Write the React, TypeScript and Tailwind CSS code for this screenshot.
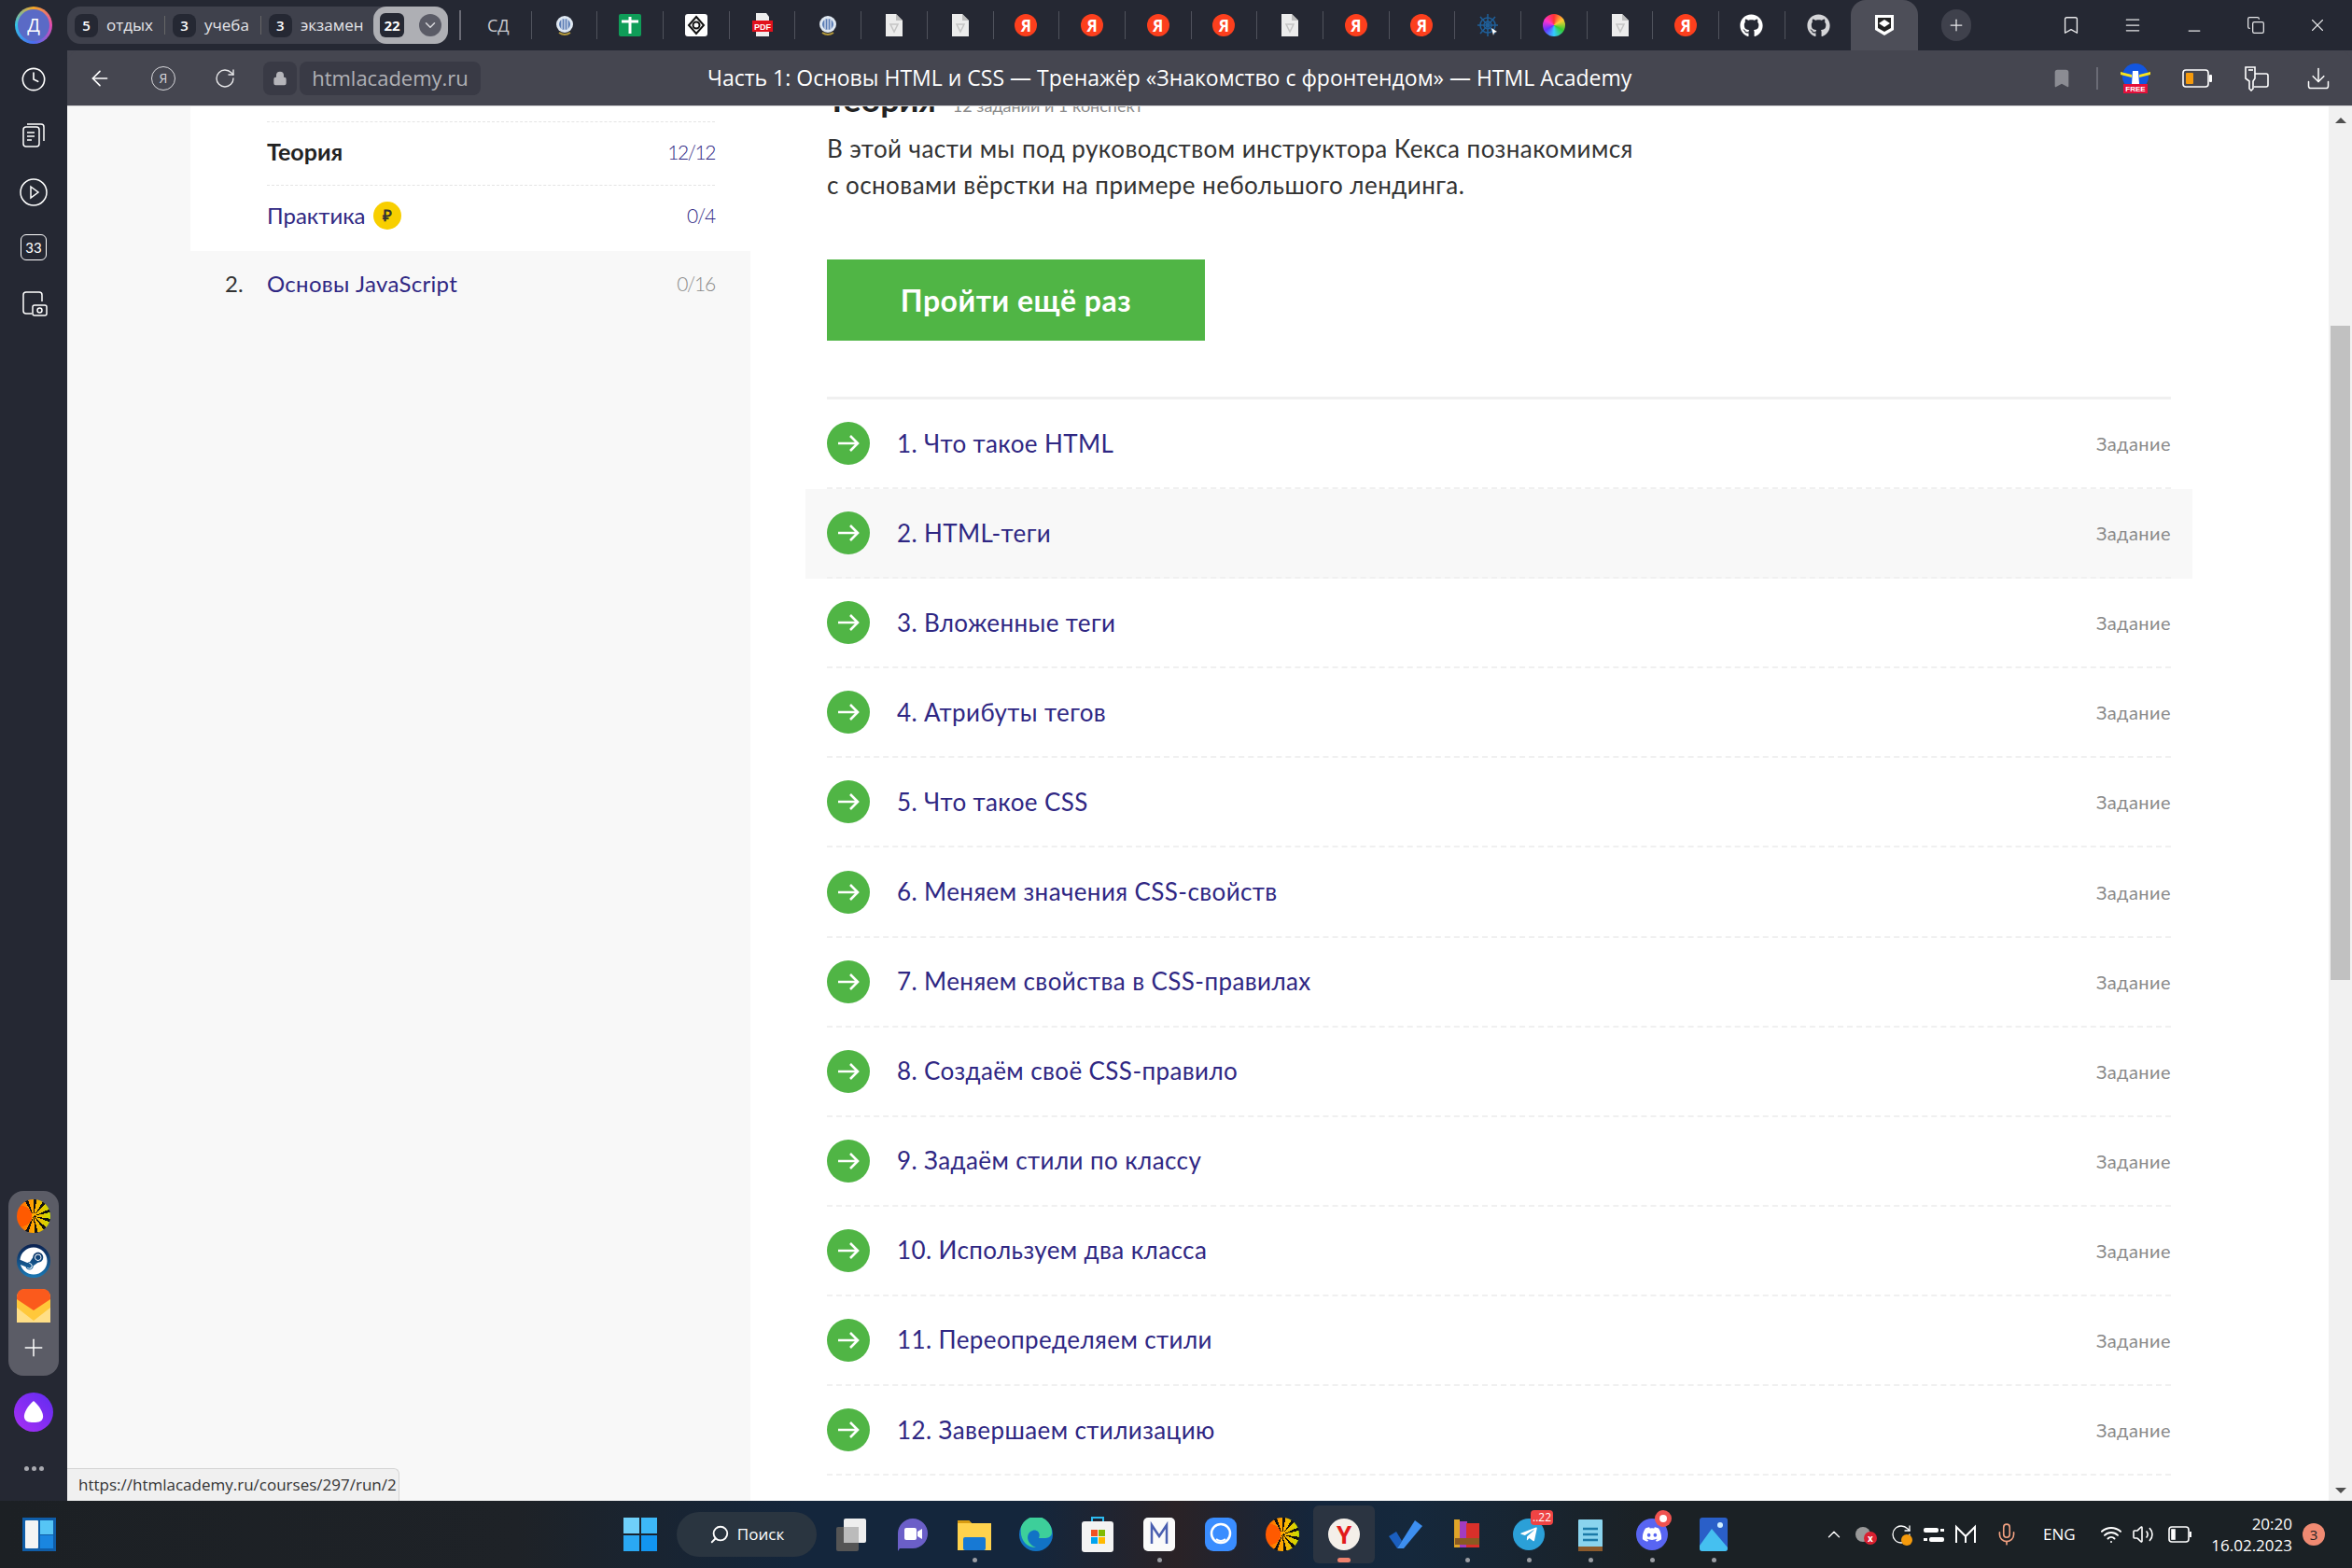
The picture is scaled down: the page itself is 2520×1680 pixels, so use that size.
import React from "react";
import { ArrowLeft, Bookmark, ChevronDown, ChevronUp, Copy, Download, Menu, Mic, Minus, Plus, RotateCw, Volume2, Wifi, X, Lock, Clock, Search } from "lucide-react";
import { FaDiscord, FaGithub, FaSteam, FaTelegramPlane } from "react-icons/fa";

const lessons = [
  "1. Что такое HTML",
  "2. HTML-теги",
  "3. Вложенные теги",
  "4. Атрибуты тегов",
  "5. Что такое CSS",
  "6. Меняем значения CSS-свойств",
  "7. Меняем свойства в CSS-правилах",
  "8. Создаём своё CSS-правило",
  "9. Задаём стили по классу",
  "10. Используем два класса",
  "11. Переопределяем стили",
  "12. Завершаем стилизацию",
];

type TabKind = "text" | "globe" | "sheet" | "hex" | "pdf" | "doc" | "ya" | "web" | "wheel" | "git" | "gitdim";
const tabs: TabKind[] = ["text", "globe", "sheet", "hex", "pdf", "globe", "doc", "doc", "ya", "ya", "ya", "ya", "doc", "ya", "ya", "web", "wheel", "doc", "ya", "git", "gitdim"];

function YaBadge() {
  return <span className="w-6 h-[24px] rounded-full bg-[#fc3f1d] flex items-center justify-center text-white text-[17px] font-bold leading-none">Я</span>;
}

function SunIcon() {
  return <span className="w-9 h-9 rounded-full bg-[radial-gradient(circle_at_15%_50%,#ff5a00_0_30%,transparent_31%),repeating-conic-gradient(#111_0_11deg,transparent_11deg_33deg),linear-gradient(90deg,#ff5a00,#ffb000_55%,#c8e000)]" />;
}

function TabIcon({ kind }: { kind: TabKind }) {
  switch (kind) {
    case "text":
      return <span className="text-[#c8c9cf] text-[18px] leading-none">СД</span>;
    case "globe":
      return (
        <svg width="20" height="26" viewBox="0 0 20 26"><circle cx="10" cy="12" r="9" fill="#dfe8f2" /><circle cx="10" cy="12" r="6" fill="#5b7db5" /><path d="M7 7v10M10 6v12M13 7v10" stroke="#fff" /><path d="M4 21 q6 4 12 0" stroke="#b59a3a" strokeWidth="2" fill="none" /></svg>
      );
    case "sheet":
      return (
        <svg width="24" height="24" viewBox="0 0 24 24"><rect width="24" height="24" rx="2" fill="#0f9d58" /><path d="M3 8h18M12 3v18" stroke="#fff" strokeWidth="3" /></svg>
      );
    case "hex":
      return (
        <svg width="24" height="24" viewBox="0 0 24 24"><rect width="24" height="24" rx="3" fill="#fff" /><path d="M12 3l8 9-8 9-8-9z" fill="none" stroke="#111" strokeWidth="2" /><circle cx="12" cy="12" r="3.5" fill="none" stroke="#111" strokeWidth="2" /></svg>
      );
    case "pdf":
      return (
        <svg width="24" height="26" viewBox="0 0 24 26"><path d="M5 0h11l3 4v4H5z" fill="#eee" /><rect x="1" y="8" width="22" height="12" fill="#e2101c" /><text x="12" y="18" textAnchor="middle" fontSize="9" fontWeight="700" fill="#fff" fontFamily="Liberation Sans">PDF</text><rect x="5" y="20" width="14" height="5" fill="#eee" /></svg>
      );
    case "doc":
      return (
        <svg width="18" height="24" viewBox="0 0 18 24"><path d="M0 0h11l7 7v17H0z" fill="#ececec" /><path d="M11 0v7h7z" fill="#bdbdbd" /><path d="M5 11h8l-4 8z" fill="none" stroke="#c4c4c4" strokeWidth="1.5" /></svg>
      );
    case "ya":
      return <YaBadge />;
    case "web":
      return (
        <svg width="24" height="26" viewBox="0 0 24 26" stroke="#1f5f99" strokeWidth="1.5" fill="none"><path d="M12 1v24M1 13h22M4 4l16 18M20 4L4 22" /><circle cx="12" cy="13" r="4" /><circle cx="12" cy="13" r="8" /><path d="M16 16l6 4-3 1-1 3z" fill="#fff" stroke="none" /></svg>
      );
    case "wheel":
      return <span className="w-6 h-6 rounded-full bg-[conic-gradient(#f33,#fc3,#3c3,#3cf,#63f,#f3c,#f33)]" />;
    case "git":
      return <FaGithub className="text-white text-[25px]" />;
    case "gitdim":
      return <FaGithub className="text-[#d5d5d8] text-[25px]" />;
  }
}

function TabChip({ n, label }: { n: string; label: string }) {
  return (
    <div className="flex items-center">
      <span className="w-[25px] h-[25px] rounded-lg bg-[#252833] flex items-center justify-center text-white text-[15px] font-semibold">{n}</span>
      <span className="ml-[9px] text-[#e4e4e8] text-[17px]">{label}</span>
    </div>
  );
}

function TabBar() {
  return (
    <div className="h-[54px] shrink-0 flex items-center bg-[#252833]">
      <div className="w-[72px] flex justify-center">
        <div className="w-10 h-10 rounded-full bg-[conic-gradient(#f5a623,#e24bb0,#4a6cf0,#31c4e8,#f5a623)] flex items-center justify-center">
          <span className="w-[34px] h-[34px] rounded-full bg-[#5a6ac6] flex items-center justify-center text-white text-[20px]">Д</span>
        </div>
      </div>
      <div className="w-[408px] h-10 rounded-[14px] bg-[#3f414c] flex items-center pl-2">
        <TabChip n="5" label="отдых" />
        <span className="w-px h-5 bg-[#666] ml-3 mr-2" />
        <TabChip n="3" label="учеба" />
        <span className="w-px h-5 bg-[#666] ml-3 mr-2" />
        <TabChip n="3" label="экзамен" />
        <div className="ml-auto w-[80px] h-10 rounded-[14px] bg-[#aeafb4] flex items-center justify-between px-[7px]">
          <span className="w-[26px] h-[26px] rounded-md bg-[#252833] flex items-center justify-center text-white text-[15px] font-bold">22</span>
          <span className="w-6 h-6 rounded-full bg-[#5a5b66] flex items-center justify-center"><ChevronDown size={18} className="text-[#d8d8dc]" /></span>
        </div>
      </div>
      <span className="w-0.5 h-8 bg-[#6a6b75] ml-3" />
      <div className="flex items-center ml-[5px]">
        {tabs.map((t, i) => (
          <div key={i} className={`w-[70.7px] h-[30px] flex items-center justify-center ${i < tabs.length - 1 ? "border-r border-[#50525c]" : ""}`}>
            <TabIcon kind={t} />
          </div>
        ))}
      </div>
      <div className="w-[72px] h-[54px] rounded-t-2xl bg-[#4d4e58] flex items-center justify-center">
        <svg width="22" height="24" viewBox="0 0 22 24"><path d="M1 1h20v16l-10 6-10-6z" fill="#fff" /><path d="M4 4h14v11l-7 4-7-4z" fill="#222" /><path d="M11 6l6 4-6 4-6-4z" fill="#fff" /></svg>
      </div>
      <div className="ml-[25px] w-8 h-[34px] rounded-full bg-[#3f414c] flex items-center justify-center"><Plus size={20} className="text-[#e8e8ea]" strokeWidth={1.5} /></div>
      <div className="flex items-center ml-[74px] text-[#e8e8ea]">
        <span className="w-[66px] flex justify-center"><Bookmark size={22} strokeWidth={1.5} /></span>
        <span className="w-[66px] flex justify-center"><Menu size={20} strokeWidth={1.5} /></span>
        <span className="w-[66px] flex justify-center"><Minus size={20} strokeWidth={1.5} className="mt-3" /></span>
        <span className="w-[66px] flex justify-center"><Copy size={20} strokeWidth={1.5} /></span>
        <span className="w-[66px] flex justify-center"><X size={22} strokeWidth={1.2} /></span>
      </div>
    </div>
  );
}

function AddressBar() {
  return (
    <div className="h-[60px] shrink-0 rounded-t-[14px] bg-[#454650] border-b border-[#d6d6d8] flex items-center relative font-['Open_Sans',sans-serif]">
      <span className="w-[70px] flex justify-center"><ArrowLeft size={26} strokeWidth={1.5} className="text-white" /></span>
      <span className="w-[66px] flex justify-center">
        <span className="w-[26px] h-[26px] rounded-full border-[1.5px] border-[#d8d8dc] flex items-center justify-center text-[#d8d8dc] text-[14px]">Я</span>
      </span>
      <span className="w-[66px] flex justify-center"><RotateCw size={24} strokeWidth={1.4} className="text-[#e8e8ea]" /></span>
      <span className="ml-[8px] w-9 h-9 rounded-lg bg-[#393a45] flex items-center justify-center"><Lock size={16} className="text-[#b5b5ba]" fill="#b5b5ba" /></span>
      <span className="ml-[3px] w-[194px] h-9 rounded-lg bg-[#393a45] flex items-center justify-center text-[#b0b1b6] text-[22px]">htmlacademy.ru</span>
      <span className="ml-[243px] text-white text-[23px] whitespace-nowrap">Часть 1: Основы HTML и CSS — Тренажёр «Знакомство с фронтендом» — HTML Academy</span>
      <div className="ml-auto mr-[3px] flex items-center text-white">
        <Bookmark size={22} fill="#8b8c93" className="text-[#8b8c93]" />
        <span className="w-0.5 h-6 bg-[#6a6b75] ml-[26px] mr-[24px]" />
        <svg width="32" height="32" viewBox="0 0 32 32">
          <circle cx="16" cy="14" r="14" fill="#1256e0" />
          <path d="M0 9l12 3v3L0 12zM32 9l-12 3v3l12-3z" fill="#f7e21e" />
          <path d="M13 8h6l1 14h-8z" fill="#fff" />
          <rect x="3" y="22" width="26" height="10" fill="#e5103a" />
          <text x="16" y="30" textAnchor="middle" fontSize="8" fontWeight="700" fill="#fff" fontFamily="Liberation Sans">FREE</text>
        </svg>
        <svg className="ml-[34px]" width="32" height="20" viewBox="0 0 32 20"><rect x="1" y="1" width="27" height="18" rx="3" fill="none" stroke="#fff" strokeWidth="1.6" /><rect x="4" y="4" width="8" height="12" rx="1" fill="#f59a0c" /><rect x="29" y="6" width="3" height="8" rx="1" fill="#fff" /></svg>
        <svg className="ml-[34px]" width="28" height="28" viewBox="0 0 28 28" fill="none" stroke="#fff" strokeWidth="1.6"><path d="M2 2h10v12l-2 3v8l-2 2-2-2v-8l-4-3z" /><path d="M12 9h12q2 0 2 2v10q0 2-2 2H11" /><path d="M5 5h5" /></svg>
        <span className="w-[66px] ml-[19px] flex justify-center"><Download size={28} strokeWidth={1.3} /></span>
      </div>
    </div>
  );
}

function Rail() {
  return (
    <div className="w-[72px] shrink-0 bg-[#252833] flex flex-col items-center text-white">
      <Clock size={28} strokeWidth={1.4} className="mt-[17px]" />
      <svg className="mt-[32px]" width="28" height="28" viewBox="0 0 28 28" fill="none" stroke="#fff" strokeWidth="1.5"><rect x="3" y="5" width="17" height="21" rx="3" /><path d="M7 2h15q3 0 3 3v15" /><path d="M7 11h8M7 15h8M7 19h5" /></svg>
      <svg className="mt-[32px]" width="30" height="30" viewBox="0 0 30 30" fill="none" stroke="#fff" strokeWidth="1.5"><circle cx="15" cy="15" r="14" /><path d="M12 9l8 6-8 6z" /></svg>
      <span className="mt-[30px] w-7 h-7 rounded-md border-[1.5px] border-white flex items-center justify-center text-[15px]">33</span>
      <svg className="mt-[32px]" width="30" height="28" viewBox="0 0 30 28" fill="none" stroke="#fff" strokeWidth="1.5"><path d="M13 25H7q-3 0-3-3V5q0-3 3-3h14q3 0 3 3v7" /><rect x="14" y="16" width="15" height="11" rx="2" /><circle cx="21.5" cy="21.5" r="2.5" /></svg>
      <div className="mt-auto w-[54px] h-[198px] rounded-2xl bg-[#5b5c66] flex flex-col items-center pt-[9px] gap-[12px]">
        <SunIcon />
        <span className="w-9 h-9 rounded-full bg-[linear-gradient(#0b2150,#1a79b5)] flex items-center justify-center"><FaSteam className="text-white text-[30px]" /></span>
        <svg width="36" height="36" viewBox="0 0 36 36"><rect width="36" height="36" rx="9" fill="#ffc83a" /><path d="M0 20l18 14 18-14v16H0z" fill="#ffdf87" /><path d="M0 9q0-9 9-9h18q9 0 9 9v2L18 23 0 11z" fill="#fb5a1c" /></svg>
        <Plus size={30} strokeWidth={1.2} />
      </div>
      <span className="mt-[18px] w-[42px] h-[42px] rounded-full bg-[linear-gradient(45deg,#a92ff5,#5f2cf0)] flex items-center justify-center">
        <svg width="22" height="24" viewBox="0 0 22 24"><path d="M11 0C5 5 0 13 1 18c1 4 4 5 10 5s9-1 10-5c1-5-4-13-10-18z" fill="#fff" /></svg>
      </span>
      <span className="mt-[37px] mb-[32px] flex gap-[3px]">
        <i className="w-[5px] h-[5px] rounded-full bg-[#a9aab0]" />
        <i className="w-[5px] h-[5px] rounded-full bg-[#a9aab0]" />
        <i className="w-[5px] h-[5px] rounded-full bg-[#a9aab0]" />
      </span>
    </div>
  );
}

function Sidebar() {
  return (
    <aside className="w-[732px] shrink-0 bg-[#f8f8f8] pl-[132px] text-[24px] text-[#2f2783]">
      <div className="bg-white pl-[82px] pr-[38px] pt-4">
        <div className="h-[68px] pb-[3px] border-t border-dashed border-[#e4e4e4] flex items-center justify-between">
          <span className="text-[25px] font-bold text-[#222]">Теория</span>
          <span className="text-[21px] font-light tracking-[-1.4px]">12/12</span>
        </div>
        <div className="h-[71px] pb-[7px] border-t border-dashed border-[#e4e4e4] flex items-center justify-between">
          <span className="flex items-center gap-[8px]">
            Практика
            <span className="w-[30px] h-[30px] rounded-full bg-[#f8cf00] flex items-center justify-center text-[#333] text-[17px] font-bold">₽</span>
          </span>
          <span className="text-[21px] font-light tracking-[-1.2px]">0/4</span>
        </div>
      </div>
      <div className="h-[72px] pb-[2px] pl-[37px] pr-[38px] flex items-center">
        <span className="w-[45px] text-[#333]">2.</span>
        <span className="tracking-[0.3px]">Основы JavaScript</span>
        <span className="ml-auto text-[21px] font-light tracking-[-1.2px] text-[#8a8a8a]">0/16</span>
      </div>
    </aside>
  );
}

function LessonRow({ title, active }: { title: string; active: boolean }) {
  return (
    <li className={`h-[96.1px] -mx-[23px] px-[23px] shrink-0 ${active ? "bg-[#f8f8f8]" : ""}`}>
      <div className="h-full flex items-center border-b-2 border-dashed border-[#f0f0f0]">
        <span className="w-[46px] h-[46px] rounded-full bg-[#50b545] flex items-center justify-center">
          <svg width="24" height="20" viewBox="0 0 24 20" fill="none" stroke="#fff" strokeWidth="2.6"><path d="M1 10h21M14 2l8 8-8 8" /></svg>
        </span>
        <span className="ml-[29px] text-[26px] tracking-[0.4px] text-[#2f2783]">{title}</span>
        <span className="ml-auto text-[20px] tracking-[0.45px] text-[#8a8a8a]">Задание</span>
      </div>
    </li>
  );
}

function MainContent() {
  return (
    <main className="flex-1 bg-white pl-[82px] pr-[169px] overflow-hidden">
      <div className="-mt-[32px] flex items-baseline gap-[18px]">
        <h2 className="text-[36px] font-bold text-[#222] leading-[48px]">Теория</h2>
        <span className="text-[18px] text-[#8a8a8a]">12 заданий и 1 конспект</span>
      </div>
      <p className="mt-[10px] text-[26px] tracking-[0.45px] leading-[39px] text-[#333]">
        В этой части мы под руководством инструктора Кекса познакомимся<br />с основами вёрстки на примере небольшого лендинга.
      </p>
      <button className="mt-[60px] block w-[405px] h-[87px] bg-[#50b545] text-white text-[32px] tracking-[0.5px] font-bold">Пройти ещё раз</button>
      <ul className="mt-[60px] border-t-[3px] border-[#f0f0f0] flex flex-col">
        {lessons.map((l, i) => (
          <LessonRow key={l} title={l} active={i === 1} />
        ))}
      </ul>
    </main>
  );
}

function Scrollbar() {
  return (
    <div className="w-[25px] shrink-0 bg-[#f1f1f1] flex flex-col items-center pt-[12px] pb-[8px]">
      <span className="w-0 h-0 border-x-[6px] border-x-transparent border-b-[6px] border-b-[#505050]" />
      <span className="mt-[217px] w-[21px] h-[701px] bg-[#c1c1c1]" />
      <span className="mt-auto w-0 h-0 border-x-[6px] border-x-transparent border-t-[6px] border-t-[#505050]" />
    </div>
  );
}

function AppTile({ children, dot, active }: { children: React.ReactNode; dot?: boolean; active?: boolean }) {
  return (
    <div className={`w-[66px] h-[62px] rounded-md relative flex items-center justify-center ${active ? "bg-[#2b3441]" : ""}`}>
      {children}
      {dot && <span className="absolute bottom-[1px] w-[5px] h-[5px] rounded-full bg-[#9a9ca2]" />}
      {active && <span className="absolute bottom-[1px] w-[14px] h-[5px] rounded-full bg-[#f0826e]" />}
    </div>
  );
}

function Taskbar() {
  return (
    <div className="h-[72px] shrink-0 flex items-center bg-[linear-gradient(90deg,#1c2024_0%,#1e2227_22%,#14263c_34%,#14263c_44%,#2a2226_50%,#14263c_56%,#15283c_60%,#1b2125_70%,#1b2125_100%)] font-['Open_Sans',sans-serif] text-white">
      <svg className="ml-[24px]" width="36" height="36" viewBox="0 0 36 36"><rect width="36" height="36" fill="#0f5da8" /><rect x="3" y="3" width="14" height="30" rx="1" fill="#f4f4f4" /><rect x="19" y="3" width="14" height="15" fill="#56c5f5" /><rect x="19" y="19" width="14" height="14" fill="#1a86e0" /></svg>
      <svg className="ml-[608px]" width="36" height="36" viewBox="0 0 36 36"><rect width="17" height="17" fill="#6fd0fa" /><rect x="19" width="17" height="17" fill="#3db8f7" /><rect y="19" width="17" height="17" fill="#2aa8f3" /><rect x="19" y="19" width="17" height="17" fill="#1295f0" /></svg>
      <div className="ml-[21px] w-[150px] h-[48px] rounded-full bg-[#2a3540] flex items-center justify-center gap-2 text-[17px]">
        <Search size={22} className="-scale-x-100" />Поиск
      </div>
      <div className="ml-[4px] flex items-center">
        <AppTile>
          <svg width="36" height="36" viewBox="0 0 36 36"><rect x="2" y="10" width="24" height="26" rx="2" fill="#555" /><rect x="10" y="1" width="24" height="26" rx="2" fill="#eee" /><rect x="10" y="10" width="16" height="17" fill="#bbb" /></svg>
        </AppTile>
        <AppTile>
          <svg width="34" height="36" viewBox="0 0 34 36"><path d="M17 1a16 16 0 0 1 0 32H3l-2 3V17A16 16 0 0 1 17 1z" fill="#6b5fc8" /><rect x="8" y="11" width="13" height="13" rx="2" fill="#fff" /><path d="M22 15l5-3v11l-5-3z" fill="#fff" /></svg>
        </AppTile>
        <AppTile dot>
          <svg width="36" height="34" viewBox="0 0 36 34"><path d="M0 2h12l3 3h21v29H0z" fill="#ffd24d" /><path d="M0 2h12l3 3H0z" fill="#d89c12" /><rect x="6" y="20" width="24" height="14" rx="2" fill="#1779d4" /></svg>
        </AppTile>
        <AppTile>
          <svg width="36" height="36" viewBox="0 0 36 36"><circle cx="18" cy="18" r="18" fill="#1173c5" /><path d="M2 10a17 17 0 0 1 33 6c0 5-5 6-8 6h-6c3-7-4-11-9-7-5 4-4 13 6 17C8 32 0 24 2 10z" fill="#3dcf9a" /></svg>
        </AppTile>
        <AppTile>
          <svg width="34" height="38" viewBox="0 0 34 38"><path d="M11 7V1h12v6" fill="none" stroke="#2dbbf0" strokeWidth="2" /><rect y="5" width="34" height="33" rx="3" fill="#f3f3f3" /><rect x="10" y="14" width="7" height="7" fill="#f25022" /><rect x="18" y="14" width="7" height="7" fill="#7fba00" /><rect x="10" y="22" width="7" height="7" fill="#00a4ef" /><rect x="18" y="22" width="7" height="7" fill="#ffb900" /></svg>
        </AppTile>
        <AppTile dot>
          <svg width="34" height="36" viewBox="0 0 34 36"><rect width="34" height="36" rx="5" fill="#fafafa" /><path d="M9 28V8l8 12 8-12v20" fill="none" stroke="#4a5fb0" strokeWidth="2.5" /></svg>
        </AppTile>
        <AppTile>
          <svg width="34" height="36" viewBox="0 0 34 36"><rect width="34" height="36" rx="9" fill="#3a8dff" /><circle cx="17" cy="17" r="10" fill="none" stroke="#fff" strokeWidth="2.5" /><path d="M12 23q5 4 10 0" stroke="#fff" strokeWidth="2" fill="none" /></svg>
        </AppTile>
        <AppTile>
          <SunIcon />
        </AppTile>
        <AppTile active>
          <span className="w-[34px] h-[34px] rounded-full bg-[#f4efe9] flex items-center justify-center text-[#e21b1b] text-[26px] font-bold leading-none">Y</span>
        </AppTile>
        <AppTile>
          <svg width="36" height="30" viewBox="0 0 36 30"><path d="M0 17l8-5 6 10-5 8z" fill="#1b5fbf" /><path d="M9 30L28 0l8 6-20 24z" fill="#3d8ff0" /></svg>
        </AppTile>
        <AppTile dot>
          <svg width="30" height="36" viewBox="0 0 30 36"><rect x="1" y="2" width="6" height="30" fill="#e0a528" /><rect x="7" y="4" width="8" height="28" fill="#a23cc0" /><rect x="14" y="6" width="14" height="26" fill="#d9302a" /><rect x="2" y="22" width="26" height="7" fill="#8a5a22" /></svg>
        </AppTile>
        <AppTile dot>
          <span className="relative">
            <span className="w-[34px] h-[34px] rounded-full bg-[#2ba0d8] flex items-center justify-center"><FaTelegramPlane className="text-white text-[20px]" /></span>
            <span className="absolute -top-[9px] left-[19px] h-4 px-[2px] rounded-[4px] bg-[#ef4444] text-[12px] leading-4">..22</span>
          </span>
        </AppTile>
        <AppTile dot>
          <svg width="26" height="36" viewBox="0 0 26 36"><rect y="2" width="26" height="34" rx="1" fill="#8ad4ee" /><rect y="31" width="26" height="5" fill="#8b5a2b" /><path d="M5 12h16M5 18h16M5 24h16" stroke="#1b7aa8" strokeWidth="2.5" /></svg>
        </AppTile>
        <AppTile dot>
          <span className="relative">
            <span className="w-[34px] h-[34px] rounded-full bg-[#5865f2] flex items-center justify-center"><FaDiscord className="text-white text-[22px]" /></span>
            <span className="absolute -top-[9px] left-[20px] w-[18px] h-[18px] rounded-full bg-[#ef5350] flex items-center justify-center"><i className="w-2 h-2 rounded-full bg-white" /></span>
          </span>
        </AppTile>
        <AppTile dot>
          <svg width="30" height="36" viewBox="0 0 30 36"><rect width="30" height="36" rx="3" fill="#2a5fc8" /><path d="M0 30l13-18 17 20v1a3 3 0 0 1-3 3H3a3 3 0 0 1-3-3z" fill="#45c0f0" /><circle cx="22" cy="8" r="3" fill="#cfeeff" /></svg>
        </AppTile>
      </div>
      <div className="ml-[85px] flex items-center">
        <ChevronUp size={22} strokeWidth={1.5} />
        <span className="ml-[12px] w-6 h-6 relative">
          <span className="absolute left-0 top-1 w-4 h-4 rounded-full bg-[#999]" />
          <span className="absolute left-[9px] top-[9px] w-[14px] h-[14px] rounded-full bg-[#d92030] flex items-center justify-center text-[10px] font-bold">x</span>
        </span>
        <span className="ml-[13px] w-6 h-6 relative">
          <RotateCw size={24} strokeWidth={1.3} />
          <span className="absolute right-0 bottom-0 w-[12px] h-[12px] rounded-full bg-[#f59a0c]" />
        </span>
        <svg className="ml-[11px]" width="24" height="24" viewBox="0 0 24 24" fill="#fff"><rect x="1" y="5" width="16" height="5" rx="2" /><rect x="19" y="6" width="4" height="3" /><rect x="7" y="15" width="16" height="5" rx="2" /><rect x="1" y="16" width="4" height="3" /></svg>
        <svg className="ml-[10px]" width="24" height="22" viewBox="0 0 24 22" fill="none" stroke="#fff" strokeWidth="2"><path d="M2 20V3l10 10L22 3v17M12 13v7" /></svg>
        <Mic size={26} strokeWidth={1.5} className="ml-[19px] text-[#f0a080]" />
        <span className="ml-[26px] text-[17px]">ENG</span>
        <Wifi size={24} className="ml-[26px]" />
        <Volume2 size={24} strokeWidth={1.6} className="ml-[10px]" />
        <svg className="ml-[15px]" width="26" height="20" viewBox="0 0 26 20" fill="none" stroke="#fff" strokeWidth="1.6"><rect x="1" y="2" width="21" height="16" rx="3" /><rect x="4" y="5" width="3" height="10" fill="#fff" /><path d="M24 7v6" strokeWidth="2" /></svg>
      </div>
      <div className="ml-auto text-right text-[17px] leading-[23px]">
        <div>20:20</div>
        <div>16.02.2023</div>
      </div>
      <span className="ml-[11px] mr-[29px] w-6 h-6 rounded-full bg-[#f08a72] flex items-center justify-center text-[#222] text-[15px]">3</span>
    </div>
  );
}

export default function App() {
  return (
    <div className="w-[2520px] h-[1680px] flex flex-col overflow-hidden bg-[#252833] font-[Lato,sans-serif]">
      <div className="font-['Open_Sans',sans-serif]">
        <TabBar />
      </div>
      <div className="flex-1 min-h-0 flex">
        <Rail />
        <div className="flex-1 min-w-0 flex flex-col bg-[#454650] relative">
          <AddressBar />
          <div className="flex-1 min-h-0 flex">
            <Sidebar />
            <MainContent />
            <Scrollbar />
          </div>
          <div className="absolute left-0 bottom-0 w-[356px] h-[35px] bg-[#f0f0f0] border-t border-r border-[#d4d4d4] rounded-tr-md flex items-center pl-[12px] text-[17px] text-[#333] font-['Open_Sans',sans-serif] whitespace-nowrap">
            https://htmlacademy.ru/courses/297/run/2
          </div>
        </div>
      </div>
      <Taskbar />
    </div>
  );
}
